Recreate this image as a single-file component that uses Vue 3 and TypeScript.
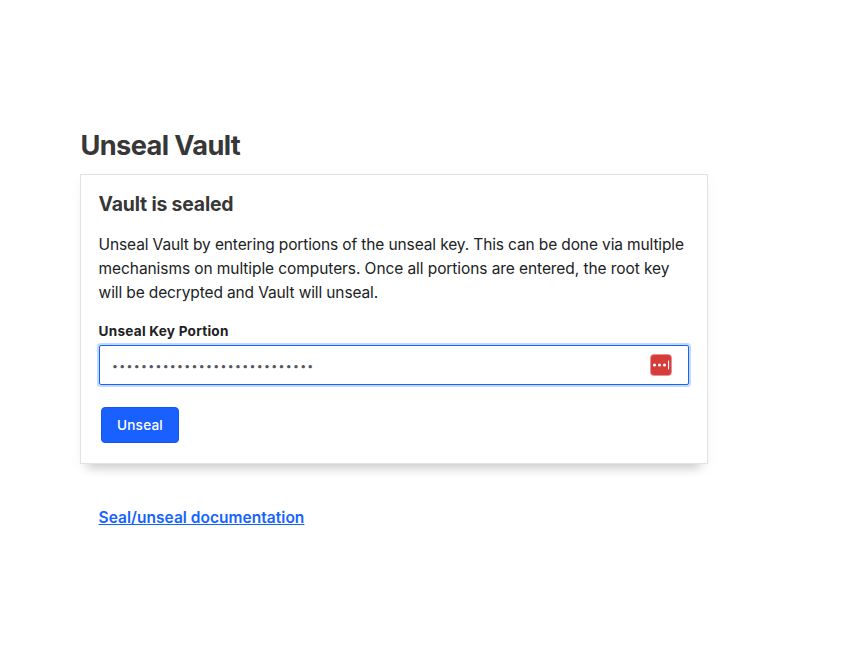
<script setup lang="ts">
import { ref } from 'vue'

interface CopyLine {
  text: string
  tracking: string
}

const unsealKey = ref<string>('k'.repeat(28))
const lines: CopyLine[] = [
  { text: 'Unseal Vault by entering portions of the unseal key. This can be done via multiple', tracking: '-0.125px' },
  { text: 'mechanisms on multiple computers. Once all portions are entered, the root key', tracking: '-0.08px' },
  { text: 'will be decrypted and Vault will unseal.', tracking: '-0.125px' },
]
</script>

<template>
  <main class="page">
    <h1 class="title"><span>Unseal Vault</span></h1>
    <form class="card" @submit.prevent>
      <h2 class="heading"><span>Vault is sealed</span></h2>
      <p class="copy">
        <span v-for="line in lines" :key="line.text" class="line" :style="{ letterSpacing: line.tracking }">{{ line.text }}</span>
      </p>
      <label class="label" for="key"><span>Unseal Key Portion</span></label>
      <div class="field">
        <input id="key" v-model="unsealKey" class="input" type="password" autocomplete="off" />
        <svg class="manager" viewBox="0 0 22 22" aria-hidden="true">
          <rect x="0.5" y="0.5" width="21" height="21" rx="3.5" fill="#d63c3a" stroke="#e58b89" stroke-width="0.6" />
          <circle cx="4.5" cy="11" r="1.6" fill="#fff" />
          <circle cx="9.5" cy="11" r="1.6" fill="#fff" />
          <circle cx="14.5" cy="11" r="1.6" fill="#fff" />
          <rect x="18" y="6.6" width="1.1" height="8.8" rx="0.5" fill="#fff" />
        </svg>
      </div>
      <button class="button" type="submit">Unseal</button>
    </form>
    <a class="link" href="#"><span>Seal/unseal documentation</span></a>
  </main>
</template>

<style>
body {
  margin: 0;
  background: #fff;
}
</style>

<style scoped>
.page {
  box-sizing: border-box;
  width: 708px;
  min-height: 671px;
  padding: 128px 0 0 80px;
  font-family: Inter, 'Liberation Sans', sans-serif;
  color: #202224;
}
.title {
  margin: 0 0 10px;
  padding-left: 0.5px;
  font-size: 27.2px;
  line-height: 36px;
  font-weight: 700;
  letter-spacing: -0.63px;
  color: #373737;
}
.card {
  box-sizing: border-box;
  display: flex;
  flex-direction: column;
  align-items: flex-start;
  width: 628px;
  height: 290px;
  padding: 17px 18px 0 17.6px;
  border: 1px solid #e1e1e1;
  box-shadow: 0 12px 10px -8px rgba(0, 0, 0, 0.18), 0 4px 12px rgba(0, 0, 0, 0.04);
  background: #fff;
}
.heading {
  margin: 0 0 16px;
  font-size: 19.4px;
  line-height: 25px;
  font-weight: 700;
  letter-spacing: -0.18px;
  color: #373737;
}
.copy {
  margin: 0;
  font-size: 15.5px;
  line-height: 24px;
}
.line {
  display: block;
  white-space: nowrap;
}
.label {
  margin-top: 16px;
  font-size: 13.6px;
  line-height: 20px;
  font-weight: 700;
  letter-spacing: 0.23px;
}
.field {
  box-sizing: border-box;
  display: flex;
  align-items: center;
  width: 590px;
  height: 40px;
  margin: 4px 0 0 0.4px;
  padding: 0 16px 0 12px;
  border: 1px solid #1563ff;
  border-radius: 2px;
  box-shadow: 0 0 0 2px #c4d9ff;
}
.input {
  flex: 1;
  min-width: 0;
  padding: 2px 0 0;
  border: 0;
  outline: 0;
  background: transparent;
  font-family: Inter, sans-serif;
  font-size: 10.5px;
  letter-spacing: 1.33px;
  color: #525761;
}
.manager {
  width: 22px;
  height: 22px;
}
.button {
  width: 78px;
  height: 36px;
  margin: 22px 0 0 2.4px;
  padding: 0;
  border: 1px solid #1457e8;
  border-radius: 4px;
  background: #1a60ff;
  color: #fff;
  font-family: Inter, sans-serif;
  font-size: 13.6px;
  font-weight: 500;
  letter-spacing: 0.2px;
}
.link {
  display: inline-block;
  margin: 42px 0 0 18.6px;
  font-size: 15.5px;
  line-height: 24px;
  font-weight: 600;
  letter-spacing: 0.03px;
  color: #1563ff;
  text-decoration: underline;
}
</style>
